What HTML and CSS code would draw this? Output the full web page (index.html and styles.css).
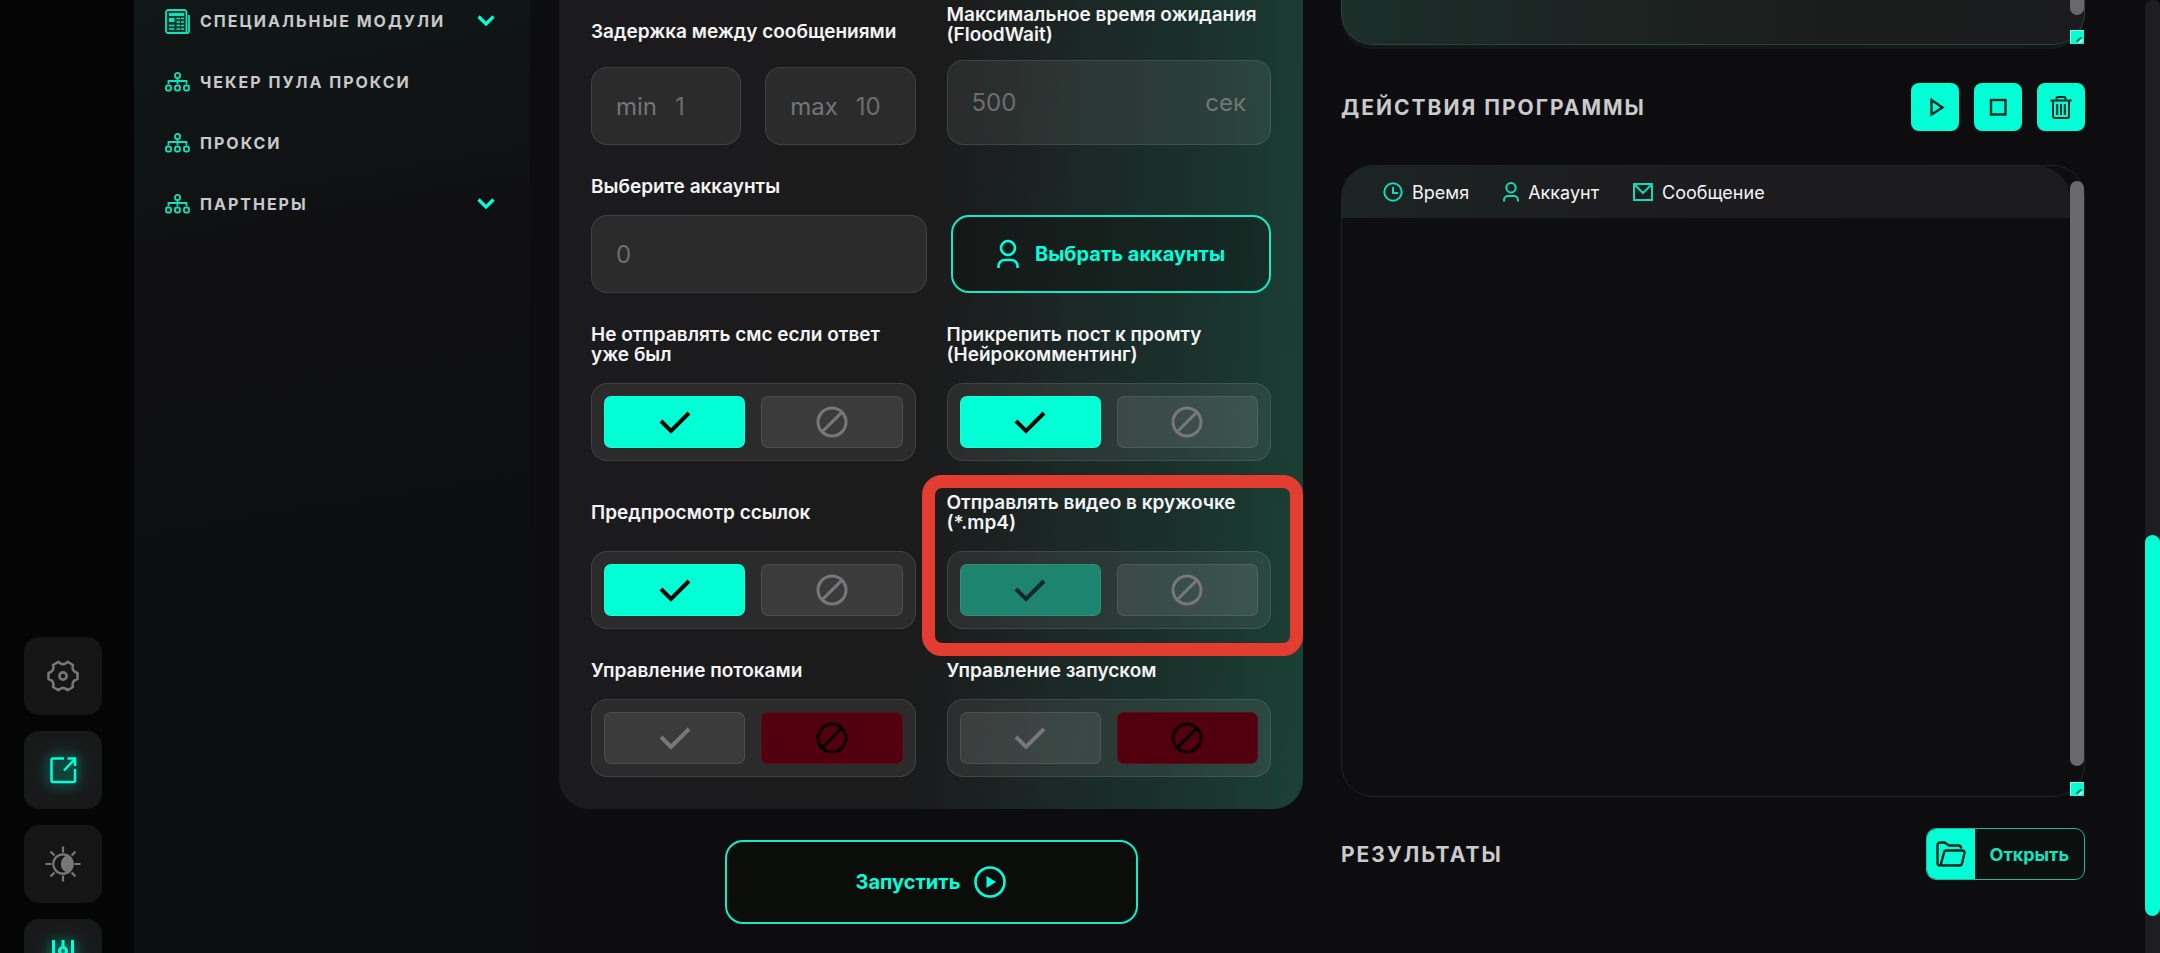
FILE: index.html
```html
<!DOCTYPE html>
<html lang="ru">
<head>
<meta charset="utf-8">
<title>Панель модулей</title>
<link rel="stylesheet" href="styles.css">
</head>
<body>
<svg class="sprite" aria-hidden="true">
  <symbol id="i-check" viewBox="0 0 32 24"><path d="M2 11l10 10L30 3" fill="none" stroke="currentColor" stroke-width="4"/></symbol>
  <symbol id="i-ban" viewBox="0 0 32 32"><path d="M16 2a14 14 0 1 0 0 28a14 14 0 1 0 0-28M6.100 25.900L25.900 6.100" fill="none" stroke="currentColor" stroke-width="3"/></symbol>
  <symbol id="i-tree" viewBox="0 0 25 20"><g fill="none" stroke="currentColor" stroke-width="1.800"><circle cx="12.500" cy="3.500" r="2.600"/><path d="M12.500 6v6M3.500 12V9h18v3"/><rect x="1" y="13.500" width="5" height="5" rx="1.500"/><rect x="10" y="13.500" width="5" height="5" rx="2"/><rect x="19" y="13.500" width="5" height="5" rx="1.500"/></g></symbol>
  <symbol id="i-chev" viewBox="0 0 18 12"><path d="M1.500 1.500L9 9l7.500-7.500" fill="none" stroke="currentColor" stroke-width="3.200"/></symbol>
  <symbol id="i-user" viewBox="0 0 22 30"><g fill="none" stroke="currentColor" stroke-width="2.600"><circle cx="11" cy="9" r="7"/><path d="M1.500 29v-2a6 6 0 0 1 6-6h7a6 6 0 0 1 6 6v2"/></g></symbol>
  <symbol id="i-grip" viewBox="0 0 14 14"><path d="M0 0h14v14H0z" fill="#00ffd5"/><path d="M6.500 11.500l5-4" fill="none" stroke="#064" stroke-width="1.800"/><path d="M9 13l3.500-3.500" fill="none" stroke="#e8fffa" stroke-width="2"/><path d="M.5 14V.5H14" fill="none" stroke="#8ffce8"/></symbol>
</svg>
<div class="app">
  <div class="rail">
    <button class="rail-btn" aria-label="Настройки"><svg width="32" height="32" viewBox="0 0 32 32" fill="none" stroke="currentColor" stroke-width="2.600" stroke-linejoin="round"><path d="M30.500 12.900V19.100Q24.200 20.800 25.900 27L20.600 30.100Q16 25.500 11.400 30.100L6.100 27Q7.800 20.800 1.500 19.100V12.900Q7.800 11.200 6.100 5L11.400 1.900Q16 6.500 20.600 1.900L25.900 5Q24.200 11.200 30.500 12.900z"/><circle cx="16" cy="16" r="3.600"/></svg></button>
    <button class="rail-btn rail-btn-on" aria-label="Открыть"><svg width="28" height="28" viewBox="0 0 28 28" fill="none" stroke="currentColor" stroke-width="2.500"><path d="M15 2.500H4A1.500 1.500 0 0 0 2.500 4v20.500A1.500 1.500 0 0 0 4 26h20.500a1.500 1.500 0 0 0 1.500-1.500V13M15 14.500L26 3M18.500 2.500H26V10"/></svg></button>
    <button class="rail-btn" aria-label="Тема"><svg width="36" height="36" viewBox="0 0 36 36" fill="none" stroke="currentColor" stroke-width="2.200"><circle cx="18" cy="18" r="9.700"/><path d="M22 9.500a9.500 9.500 0 0 1 0 17a9 9 0 0 1 0-17z" fill="currentColor" stroke="none"/><circle cx="22" cy="18" r="5" fill="currentColor" stroke="none"/><path d="M18 .5v6M18 29.500v6M.5 18h6M29.500 18h6M5.500 5.500l4 4M26.500 26.500l4 4M5.500 30.500l4-4M26.500 9.500l4-4"/></svg></button>
    <button class="rail-btn rail-btn-on" aria-label="Параметры"><svg width="24" height="36" viewBox="0 0 24 36" fill="none" stroke="currentColor" stroke-width="3"><path d="M2.500 0v19M2.500 26v10M12 0v7M12 15v21M21.500 0v19M21.500 26v10"/><circle cx="12" cy="11" r="3.500"/><circle cx="2.500" cy="22.500" r="3"/><circle cx="21.500" cy="22.500" r="3"/></svg></button>
  </div>

  <nav class="side">
    <a class="side-link" href="#"><svg class="side-ico" viewBox="0 0 25 25" height="25"><path d="M1 3.500A2.500 2.500 0 0 1 3.500 1H19a2.500 2.500 0 0 1 2.500 2.500V24H3a2 2 0 0 1-2-2zM21.500 24h1a1.500 1.500 0 0 0 1.500-1.500V6" fill="#08392f" stroke="currentColor" stroke-width="1.800"/><path d="M4 5.500h15" stroke="currentColor" stroke-width="3"/><path d="M4 11h5.500" stroke="currentColor" stroke-width="4"/><path d="M11.500 9.500h3.500m1-0h3M11.500 13h3.500m1 0h3M4 16.500h5.500m2 0h3.500m1 0h3M4 20h5.500m2 0h3.500m1 0h3" stroke="currentColor" stroke-width="1.700"/></svg><span>СПЕЦИАЛЬНЫЕ МОДУЛИ</span><svg class="chev"><use href="#i-chev"/></svg></a>
    <a class="side-link" href="#"><svg class="side-ico"><use href="#i-tree"/></svg><span>ЧЕКЕР ПУЛА ПРОКСИ</span></a>
    <a class="side-link" href="#"><svg class="side-ico"><use href="#i-tree"/></svg><span>ПРОКСИ</span></a>
    <a class="side-link" href="#"><svg class="side-ico"><use href="#i-tree"/></svg><span>ПАРТНЕРЫ</span><svg class="chev"><use href="#i-chev"/></svg></a>
  </nav>

  <main class="main">
    <form class="col" onsubmit="return false">
      <div class="card">
        <div class="row row-end">
          <div class="field">
            <span class="lbl">Задержка между сообщениями</span>
            <div class="pair">
              <label class="box"><span>min</span><input type="text" placeholder="1"></label>
              <label class="box"><span>max</span><input type="text" placeholder="10"></label>
            </div>
          </div>
          <div class="field">
            <label class="lbl" for="flood">Максимальное время ожидания (FloodWait)</label>
            <div class="box box-tall"><input id="flood" type="text" placeholder="500"><span>сек</span></div>
          </div>
        </div>
        <div class="field">
          <label class="lbl lbl-one" for="acc">Выберите аккаунты</label>
          <div class="accounts">
            <div class="box"><input id="acc" type="text" placeholder="0"></div>
            <button class="pick" type="button"><svg width="22" height="30"><use href="#i-user"/></svg>Выбрать аккаунты</button>
          </div>
        </div>
        <div class="row">
          <fieldset class="field"><legend class="lbl">Не отправлять смс если ответ уже был</legend>
            <div class="toggle">
              <label class="opt yes"><input type="radio" name="t1" aria-label="Да" checked><svg class="check"><use href="#i-check"/></svg></label>
              <label class="opt"><input type="radio" name="t1" aria-label="Нет"><svg class="ban"><use href="#i-ban"/></svg></label>
            </div></fieldset>
          <fieldset class="field"><legend class="lbl">Прикрепить пост к промту (Нейрокомментинг)</legend>
            <div class="toggle">
              <label class="opt yes"><input type="radio" name="t2" aria-label="Да" checked><svg class="check"><use href="#i-check"/></svg></label>
              <label class="opt"><input type="radio" name="t2" aria-label="Нет"><svg class="ban"><use href="#i-ban"/></svg></label>
            </div></fieldset>
        </div>
        <div class="row">
          <fieldset class="field"><legend class="lbl">Предпросмотр ссылок</legend>
            <div class="toggle">
              <label class="opt yes"><input type="radio" name="t3" aria-label="Да" checked><svg class="check"><use href="#i-check"/></svg></label>
              <label class="opt"><input type="radio" name="t3" aria-label="Нет"><svg class="ban"><use href="#i-ban"/></svg></label>
            </div></fieldset>
          <div class="marked">
          <fieldset class="field"><legend class="lbl">Отправлять видео в кружочке (*.mp4)</legend>
            <div class="toggle">
              <label class="opt yes-hover"><input type="radio" name="t4" aria-label="Да"><svg class="check"><use href="#i-check"/></svg></label>
              <label class="opt"><input type="radio" name="t4" aria-label="Нет"><svg class="ban"><use href="#i-ban"/></svg></label>
            </div></fieldset>
          </div>
        </div>
        <div class="row">
          <fieldset class="field"><legend class="lbl lbl-one">Управление потоками</legend>
            <div class="toggle">
              <label class="opt"><input type="radio" name="t5" aria-label="Да"><svg class="check"><use href="#i-check"/></svg></label>
              <label class="opt no"><input type="radio" name="t5" aria-label="Нет" checked><svg class="ban"><use href="#i-ban"/></svg></label>
            </div></fieldset>
          <fieldset class="field"><legend class="lbl lbl-one">Управление запуском</legend>
            <div class="toggle">
              <label class="opt"><input type="radio" name="t6" aria-label="Да"><svg class="check"><use href="#i-check"/></svg></label>
              <label class="opt no"><input type="radio" name="t6" aria-label="Нет" checked><svg class="ban"><use href="#i-ban"/></svg></label>
            </div></fieldset>
        </div>
      </div>
      <button class="start" type="submit">Запустить<svg width="32" height="32" viewBox="0 0 32 32"><circle cx="16" cy="16" r="14.500" fill="none" stroke="currentColor" stroke-width="2.600"/><path d="M12.500 10l9.500 6-9.500 6z" fill="currentColor"/></svg></button>
    </form>

    <div class="col">
      <div class="prev"><div class="thumb"></div><svg class="grip"><use href="#i-grip"/></svg></div>
      <div class="head">
        <h2>ДЕЙСТВИЯ ПРОГРАММЫ</h2>
        <div class="acts">
          <button class="sq" aria-label="Запустить"><svg width="24" height="24" viewBox="0 0 24 24"><path d="M8.500 5l11 7.500-11 7z" fill="none" stroke="currentColor" stroke-width="2.400"/></svg></button>
          <button class="sq" aria-label="Остановить"><svg width="24" height="24" viewBox="0 0 24 24"><rect x="5" y="5" width="14.500" height="14.500" fill="none" stroke="currentColor" stroke-width="2.400"/></svg></button>
          <button class="sq" aria-label="Очистить"><svg width="24" height="24" viewBox="0 0 24 24" fill="none" stroke="currentColor" stroke-width="2"><path d="M1.500 5.500h21M7.500 5V3.500A1.500 1.500 0 0 1 9 2h6a1.500 1.500 0 0 1 1.500 1.500V5M4 6v15a2 2 0 0 0 2 2h12a2 2 0 0 0 2-2V6M8.200 9v11M12 9v11M15.800 9v11"/></svg></button>
        </div>
      </div>
      <div class="log">
        <div class="log-view">
          <table class="log-table"><thead><tr>
            <th><span><svg width="20" height="20" viewBox="0 0 20 20" fill="none" stroke="currentColor" stroke-width="2"><circle cx="10" cy="10" r="8.700"/><path d="M10 5v6h5"/></svg>Время</span></th>
            <th><span><svg width="16" height="20" viewBox="0 0 16 20" fill="none" stroke="currentColor" stroke-width="2"><circle cx="8" cy="5.700" r="4.700"/><path d="M1 19.500V18a4 4 0 0 1 4-4h6a4 4 0 0 1 4 4v1.500"/></svg>Аккаунт</span></th>
            <th><span><svg width="20" height="18" viewBox="0 0 20 18" fill="none" stroke="currentColor" stroke-width="2"><path d="M1 1h18v16H1zM1.500 1.500L10 10l8.500-8.500"/></svg>Сообщение</span></th>
          </tr></thead></table>
        </div>
        <div class="thumb"></div><svg class="grip"><use href="#i-grip"/></svg>
      </div>
      <div class="head head-res">
        <h2>РЕЗУЛЬТАТЫ</h2>
        <button class="open"><span class="open-ico"><svg width="30" height="26" viewBox="0 0 30 26" fill="none" stroke="currentColor" stroke-width="2.400" stroke-linejoin="round"><path d="M5 24.500H4A2.500 2.500 0 0 1 1.500 22V4A2.500 2.500 0 0 1 4 1.500h4.500l4.500 3h10A2.500 2.500 0 0 1 25 7v.5M10.500 9.500h16a2 2 0 0 1 2 2.500l-2.500 10.500a2.500 2.500 0 0 1-2.500 2H6.500a1.500 1.500 0 0 1-1.400-2L8 11.500a2.500 2.500 0 0 1 2.500-2z"/></svg></span><span class="open-txt">Открыть</span></button>
      </div>
    </div>
  </main>
  <div class="scroll"><div class="scroll-thumb"></div></div>
</div>
</body>
</html>
```

FILE: styles.css
```css
* { box-sizing: border-box; }
body {
  margin: 0;
  background: #0d0d0f;
  color: #f4f4f5;
  font-family: Inter, "Noto Sans", sans-serif;
  overflow: hidden;
}
button, input { font: inherit; color: inherit; }
button { cursor: pointer; }
svg { display: block; flex: none; }
.sprite { position: absolute; width: 0; height: 0; }
.app { display: flex; height: 100vh; overflow: hidden; }

/* icon rail */
.rail {
  width: 134px;
  flex: none;
  display: flex;
  flex-direction: column;
  justify-content: flex-end;
  gap: 16px;
  padding: 0 32px 0 24px;
  margin-bottom: -44px;
  background: #050505;
}
.rail-btn {
  display: grid;
  place-items: center;
  flex: none;
  height: 78px;
  padding: 0;
  border: 0;
  border-radius: 15px;
  background: #151515;
  color: #777;
}
.rail-btn-on { background: radial-gradient(circle, #12332b 0, #181b1b 50%, #171717 100%); color: #0fd; }
.rail-btn-on svg { filter: drop-shadow(0 0 6px #00a98c); }

/* sidebar */
.side {
  width: 396px;
  flex: none;
  padding: 0 35px 0 31px;
  background: linear-gradient(170deg, #101717 0, #101415 12%, #101012 26%, #0d0e10 60%);
}
.side-link {
  display: flex;
  align-items: center;
  gap: 10px;
  height: 61px;
  color: #c9c9cb;
  font-size: 16px;
  font-weight: 700;
  letter-spacing: 2px;
  text-decoration: none;
}
.side-link:first-child { height: 42px; margin-bottom: 9px; }
.side-ico { width: 25px; height: 20px; color: #11e0b9; }
.side-link:first-child .side-ico { height: 25px; }
.chev { width: 18px; height: 12px; margin-left: auto; color: #0fd; }

/* main area */
.main { flex: 1; min-width: 0; display: flex; gap: 38px; padding: 0 60px 0 29px; }
.col { flex: 1; min-width: 0; margin: 0; display: flex; flex-direction: column; }
.card {
  display: flex;
  flex-direction: column;
  gap: 32px;
  padding: 5px 32px 32px;
  border-radius: 0 0 30px 30px;
  background: linear-gradient(93deg, #1b1b1d 0, #1b1b1c 50%, #1b2724 66%, #1a312c 83%, #1b4136 100%);
}
.row { display: grid; grid-template-columns: 1fr 1fr; gap: 31px; }
.row-end { align-items: end; }
.field { margin: 0; padding: 0; border: 0; min-width: 0; }
.lbl {
  display: flex;
  align-items: center;
  min-height: 40px;
  margin-bottom: 18px;
  padding: 0;
  font-size: 19px;
  line-height: 20px;
  font-weight: 600;
}
.lbl-one { min-height: 20px; }
.row-end .lbl { margin-bottom: 15px; }
.pair { display: flex; gap: 24px; }
.box {
  display: flex;
  align-items: center;
  gap: 18px;
  flex: 1;
  min-width: 0;
  height: 78px;
  padding: 0 24px;
  border: 1px solid rgba(255, 255, 255, .1);
  border-radius: 16px;
  background: rgba(255, 255, 255, .07);
  color: #747576;
  font-size: 24px;
}
.box-tall { height: 85px; }
.box input {
  flex: 1;
  width: 20px;
  min-width: 0;
  padding: 0;
  border: 0;
  outline: 0;
  background: none;
}
.box input::placeholder { color: #6c6d6e; opacity: 1; }
.accounts { display: grid; grid-template-columns: 21fr 20fr; gap: 24px; }
.pick, .start {
  display: flex;
  align-items: center;
  justify-content: center;
  border: 2px solid #10ecc8;
  border-radius: 18px;
  background: rgba(10, 14, 10, .3);
  color: #0fd;
  font-size: 20px;
  font-weight: 700;
}
.pick { gap: 16px; padding: 0; }
.toggle {
  display: flex;
  gap: 16px;
  height: 78px;
  padding: 12px;
  border: 1px solid rgba(255, 255, 255, .1);
  border-radius: 16px;
  background: rgba(255, 255, 255, .07);
}
.opt {
  position: relative;
  flex: 1;
  display: grid;
  place-items: center;
  border: 1px solid rgba(255, 255, 255, .09);
  border-radius: 7px;
  background: rgba(255, 250, 255, .08);
  color: #777678;
}
.opt input { position: absolute; inset: 0; width: 100%; height: 100%; margin: 0; opacity: 0; }
.yes { background: #00ffd5; color: #050505; }
.yes-hover { background: #1c846f; color: #17272a; }
.no { background: #52000d; color: #090002; border-color: #5f0a18; }
.check { width: 32px; height: 24px; }
.ban { width: 32px; height: 32px; }

/* highlight frame round one setting */
.marked { position: relative; min-width: 0; }
.marked::after {
  content: "";
  position: absolute;
  inset: -18px -32px -27px -25px;
  border: 13px solid #e33c31;
  border-radius: 20px;
  pointer-events: none;
}
.start {
  align-self: center;
  gap: 14px;
  width: 413px;
  height: 84px;
  margin-top: 31px;
  background: #0b0d0b;
}

/* right column */
.prev {
  position: relative;
  height: 45px;
  border: 1px solid #393c3c;
  border-top: 0;
  border-radius: 0 0 32px 32px;
  background: linear-gradient(90deg, #1b2f29 0, #1c2523 30%, #1b1e1c 60%, #1b1b1d 100%);
  box-shadow: -1px 5px 0 -1px #0d1a17;
}
.thumb {
  position: absolute;
  top: 0;
  right: 0;
  width: 14px;
  height: 15px;
  border-radius: 0 0 7px 7px;
  background: #69696b;
}
.grip { position: absolute; right: 0; bottom: 0; width: 14px; height: 14px; }
.head { display: flex; align-items: center; justify-content: space-between; margin: 38px 0 34px; }
.head-res { margin: 31px 0 0; }
h2 { margin: 0; font-size: 21px; font-weight: 700; letter-spacing: 2px; color: #cacacc; }
.acts { display: flex; gap: 15px; }
.sq {
  display: grid;
  place-items: center;
  width: 48px;
  height: 48px;
  padding: 0;
  border: 0;
  border-radius: 8px;
  background: #00ffd5;
  color: #0b2b25;
}
.log {
  position: relative;
  height: 632px;
  border: 1px solid #232325;
  border-radius: 32px;
  background: #0e0d0f;
}
.log .thumb { top: 15px; bottom: 30px; height: auto; border-radius: 7px; }
.log-view { margin-right: 14px; padding-left: 24px; border-radius: 31px 32px 0 0; background: linear-gradient(90deg, #1b2523 0, #1d1d1f 33%, #1b1a1c 100%); }
.log-table { border-collapse: collapse; }
.log-table th { height: 52px; padding: 0 17px; font-size: 18px; font-weight: 400; }
.log-table span { display: flex; align-items: center; gap: 9px; }
.log-table svg { color: #0ddcb8; }
.open {
  display: flex;
  height: 52px;
  padding: 0;
  border: 1px solid #22b79c;
  border-radius: 10px;
  overflow: hidden;
  background: #0b0f0d;
}
.open-ico { display: grid; place-items: center; width: 48px; height: 50px; background: #00ffd5; color: #07241f; }
.open-txt { align-self: center; padding: 0 15px; font-size: 18px; font-weight: 700; color: #12e3c1; }

/* page scrollbar */
.scroll { width: 15px; flex: none; padding-top: 535px; border-radius: 7px 7px 0 0; background: #1e1e20; }
.scroll-thumb { height: 381px; border-radius: 8px; background: #00ffd5; }
```
